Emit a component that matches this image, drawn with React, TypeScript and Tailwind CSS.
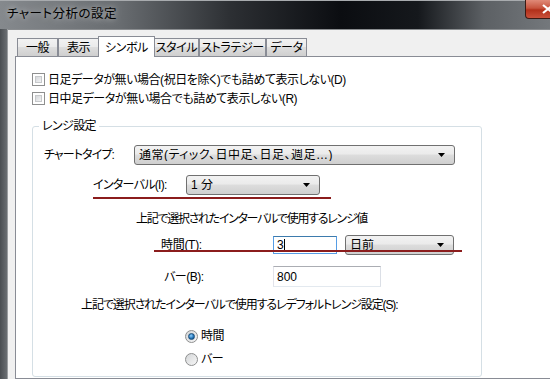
import React from 'react';

const font = "font-['Liberation_Sans','Noto_Sans_CJK_JP',sans-serif]";

const Tab: React.FC<{ label: string; width: string; active?: boolean }> = ({ label, width, active }) => {
  if (active) {
    return (
      <div
        className={`${width} relative z-10 -mb-px -mx-[1px] h-[21px] border border-b-0 border-[#898c95] bg-white flex items-start justify-center pt-[2px] text-[12px] whitespace-nowrap`}
      >
        {label}
      </div>
    );
  }
  return (
    <div
      className={`${width} h-[18px] border border-b-0 border-[#898c95] bg-[linear-gradient(#f2f2f2,#ebebeb_45%,#dddddd_50%,#cfcfcf)] flex items-center justify-center text-[12px] whitespace-nowrap`}
    >
      {label}
    </div>
  );
};

const Checkbox: React.FC<{ label: string }> = ({ label }) => (
  <div className="flex items-center h-[19px]">
    <div className="w-[13px] h-[13px] border border-[#8e8f8f] bg-white p-[2px]">
      <div className="w-full h-full border border-[#c7c9cb] bg-[linear-gradient(135deg,#d6d8db,#f2f3f4)]" />
    </div>
    <span className="ml-[3px] text-[12px] leading-none tracking-[-0.45px] whitespace-nowrap">{label}</span>
  </div>
);

const Combo: React.FC<{ text: string; width: string; height?: string; wide?: boolean }> = ({
  text,
  width,
  height = 'h-[20px]',
  wide,
}) => (
  <div
    className={`${width} ${height} rounded-[3px] border border-[#707070] bg-[linear-gradient(#f2f2f2,#ebebeb_45%,#dddddd_50%,#cfcfcf)] flex items-center pl-[4px] pr-[9px]`}
  >
    <span className={`flex-1 text-[12px] leading-none truncate ${wide ? 'tracking-[0.5px]' : ''}`}>{text}</span>
    <svg width="7" height="4" viewBox="0 0 7 4">
      <path d="M0 0H7L3.5 4Z" fill="#000" />
    </svg>
  </div>
);

const TextBox: React.FC<{ value: string; width: string; height: string; focused?: boolean }> = ({
  value,
  width,
  height,
  focused,
}) => (
  <div
    className={`${width} ${height} bg-white border flex items-center pl-[3px] text-[12px] ${
      focused
        ? 'border-[#569de5] border-t-[#3d7bad]'
        : 'border-[#e3e9ef] border-t-[#abadb3] border-l-[#e2e3ea] border-r-[#dbdfe6]'
    }`}
  >
    <span className="leading-none">{value}</span>
    {focused && <span className="w-px h-[13px] bg-black" />}
  </div>
);

const Radio: React.FC<{ label: string; checked?: boolean }> = ({ label, checked }) => (
  <div className="flex items-center h-[16px]">
    <div className="w-[13px] h-[13px] rounded-full border border-[#8e8f8f] bg-[linear-gradient(135deg,#d4d6d8,#f6f6f6)] flex items-center justify-center">
      {checked && (
        <div className="w-[7px] h-[7px] rounded-full border border-[#1a4d79] bg-[radial-gradient(circle_at_40%_35%,#8fd0ff,#1e6fb3_60%,#0d3f6e)]" />
      )}
    </div>
    <span className="ml-[3px] text-[12px] leading-none tracking-[-0.6px]">{label}</span>
  </div>
);

const App: React.FC = () => {
  return (
    <div className={`w-[550px] h-[379px] overflow-hidden bg-[#0c0e11] text-black ${font} [font-feature-settings:'palt']`}>
      {/* title bar */}
      <div className="relative h-[29px] flex items-center pl-[7px] border-t border-[#a8abae] bg-[linear-gradient(90deg,#85898d_0%,#686c70_22%,#2c2f33_42%,#0b0d11_62%,#15181c_76%,#5c6064_88%,#74787c_100%)]">
        <span className="text-[12.5px] tracking-[0.5px] text-black [text-shadow:0_0_6px_rgba(255,255,255,0.7)] -mt-[2px]">
          チャート分析の設定
        </span>
        <div className="absolute -top-px left-[525px] w-[40px] h-[19px] rounded-bl-[4px] border border-t-0 border-[#3b1a14] bg-[linear-gradient(#e08a78,#c7543e_45%,#b2301a_55%,#c9503a)] flex items-center pl-[16px]">
          <svg width="12" height="10" viewBox="0 0 12 10">
            <path d="M1 1L11 9M11 1L1 9" stroke="#fff" strokeWidth="2.2" />
          </svg>
        </div>
      </div>

      <div className="flex h-[350px]">
        {/* left frame */}
        <div className="w-[7px] bg-[linear-gradient(90deg,#4a4e52,#6a6e72)]" />
        <div className="w-px bg-[#9a9da0]" />

        {/* client area */}
        <div className="flex-1 bg-[#f0f0f0] border-t border-[#8a8d90] pt-[6px] pl-[7px] flex flex-col overflow-hidden">
          <div className="flex items-end h-[20px] ml-[2px] tracking-[-0.4px]">
            <Tab label="一般" width="w-[41px]" />
            <Tab label="表示" width="w-[41px]" />
            <Tab label="シンボル" width="w-[57px]" active />
            <Tab label="スタイル" width="w-[45px]" />
            <Tab label="ストラテジー" width="w-[67px]" />
            <Tab label="データ" width="w-[41px]" />
          </div>

          {/* tab panel */}
          <div className="flex-1 border border-[#898c95] border-r-0 bg-white pl-[16px] pt-[13px]">
            <Checkbox label="日足データが無い場合(祝日を除く)でも詰めて表示しない(D)" />
            <Checkbox label="日中足データが無い場合でも詰めて表示しない(R)" />

            {/* group box */}
            <div className="relative mt-[18px] w-[450px] h-[251px] rounded-[3px] border border-[#d5dfe5]">
              <span className="absolute -top-[8px] left-[6px] bg-white px-[3px] text-[12px] leading-[15px] tracking-[-0.6px]">
                レンジ設定
              </span>

              <div className="flex items-center mt-[18px] ml-[11px]">
                <span className="w-[90px] text-[12px] tracking-[-0.9px]">チャートタイプ:</span>
                <Combo text="通常(ティック、日中足、日足、週足…)" width="w-[321px]" wide />
              </div>

              <div className="relative flex items-center mt-[10px] ml-[60px]">
                <span className="w-[93px] text-[12px] tracking-[-0.7px]">インターバル(I):</span>
                <Combo text="1 分" width="w-[134px]" height="h-[20px]" />
                <div className="absolute left-0 top-[22px] w-[238px] h-[2px] bg-[#8b1c1c]" />
              </div>

              <div className="mt-[16px] ml-[103px] text-[12px] leading-[16px] tracking-[-1.3px] whitespace-nowrap">
                上記で選択されたインターバルで使用するレンジ値
              </div>

              <div className="relative flex items-center mt-[8px] ml-[128px]">
                <span className="w-[112px] text-[12px] tracking-[-0.3px]">時間(T):</span>
                <TextBox value="3" width="w-[64px]" height="h-[18px]" focused />
                <div className="w-[8px]" />
                <Combo text="日前" width="w-[109px]" />
                <div className="absolute -left-[7px] top-[15px] w-[308px] h-[2px] bg-[#8b1c1c]" />
              </div>

              <div className="flex items-center mt-[11px] ml-[131px]">
                <span className="w-[109px] text-[12px] tracking-[-0.5px]">バー(B):</span>
                <TextBox value="800" width="w-[108px]" height="h-[21px]" />
              </div>

              <div className="mt-[10px] ml-[48px] text-[12px] leading-[16px] tracking-[-1.1px] whitespace-nowrap">
                上記で選択されたインターバルで使用するレデフォルトレンジ設定(S):
              </div>

              <div className="mt-[15px] ml-[152px]">
                <Radio label="時間" checked />
                <div className="h-[7px]" />
                <Radio label="バー" />
              </div>
            </div>
          </div>
        </div>
      </div>
    </div>
  );
};

export default App;
